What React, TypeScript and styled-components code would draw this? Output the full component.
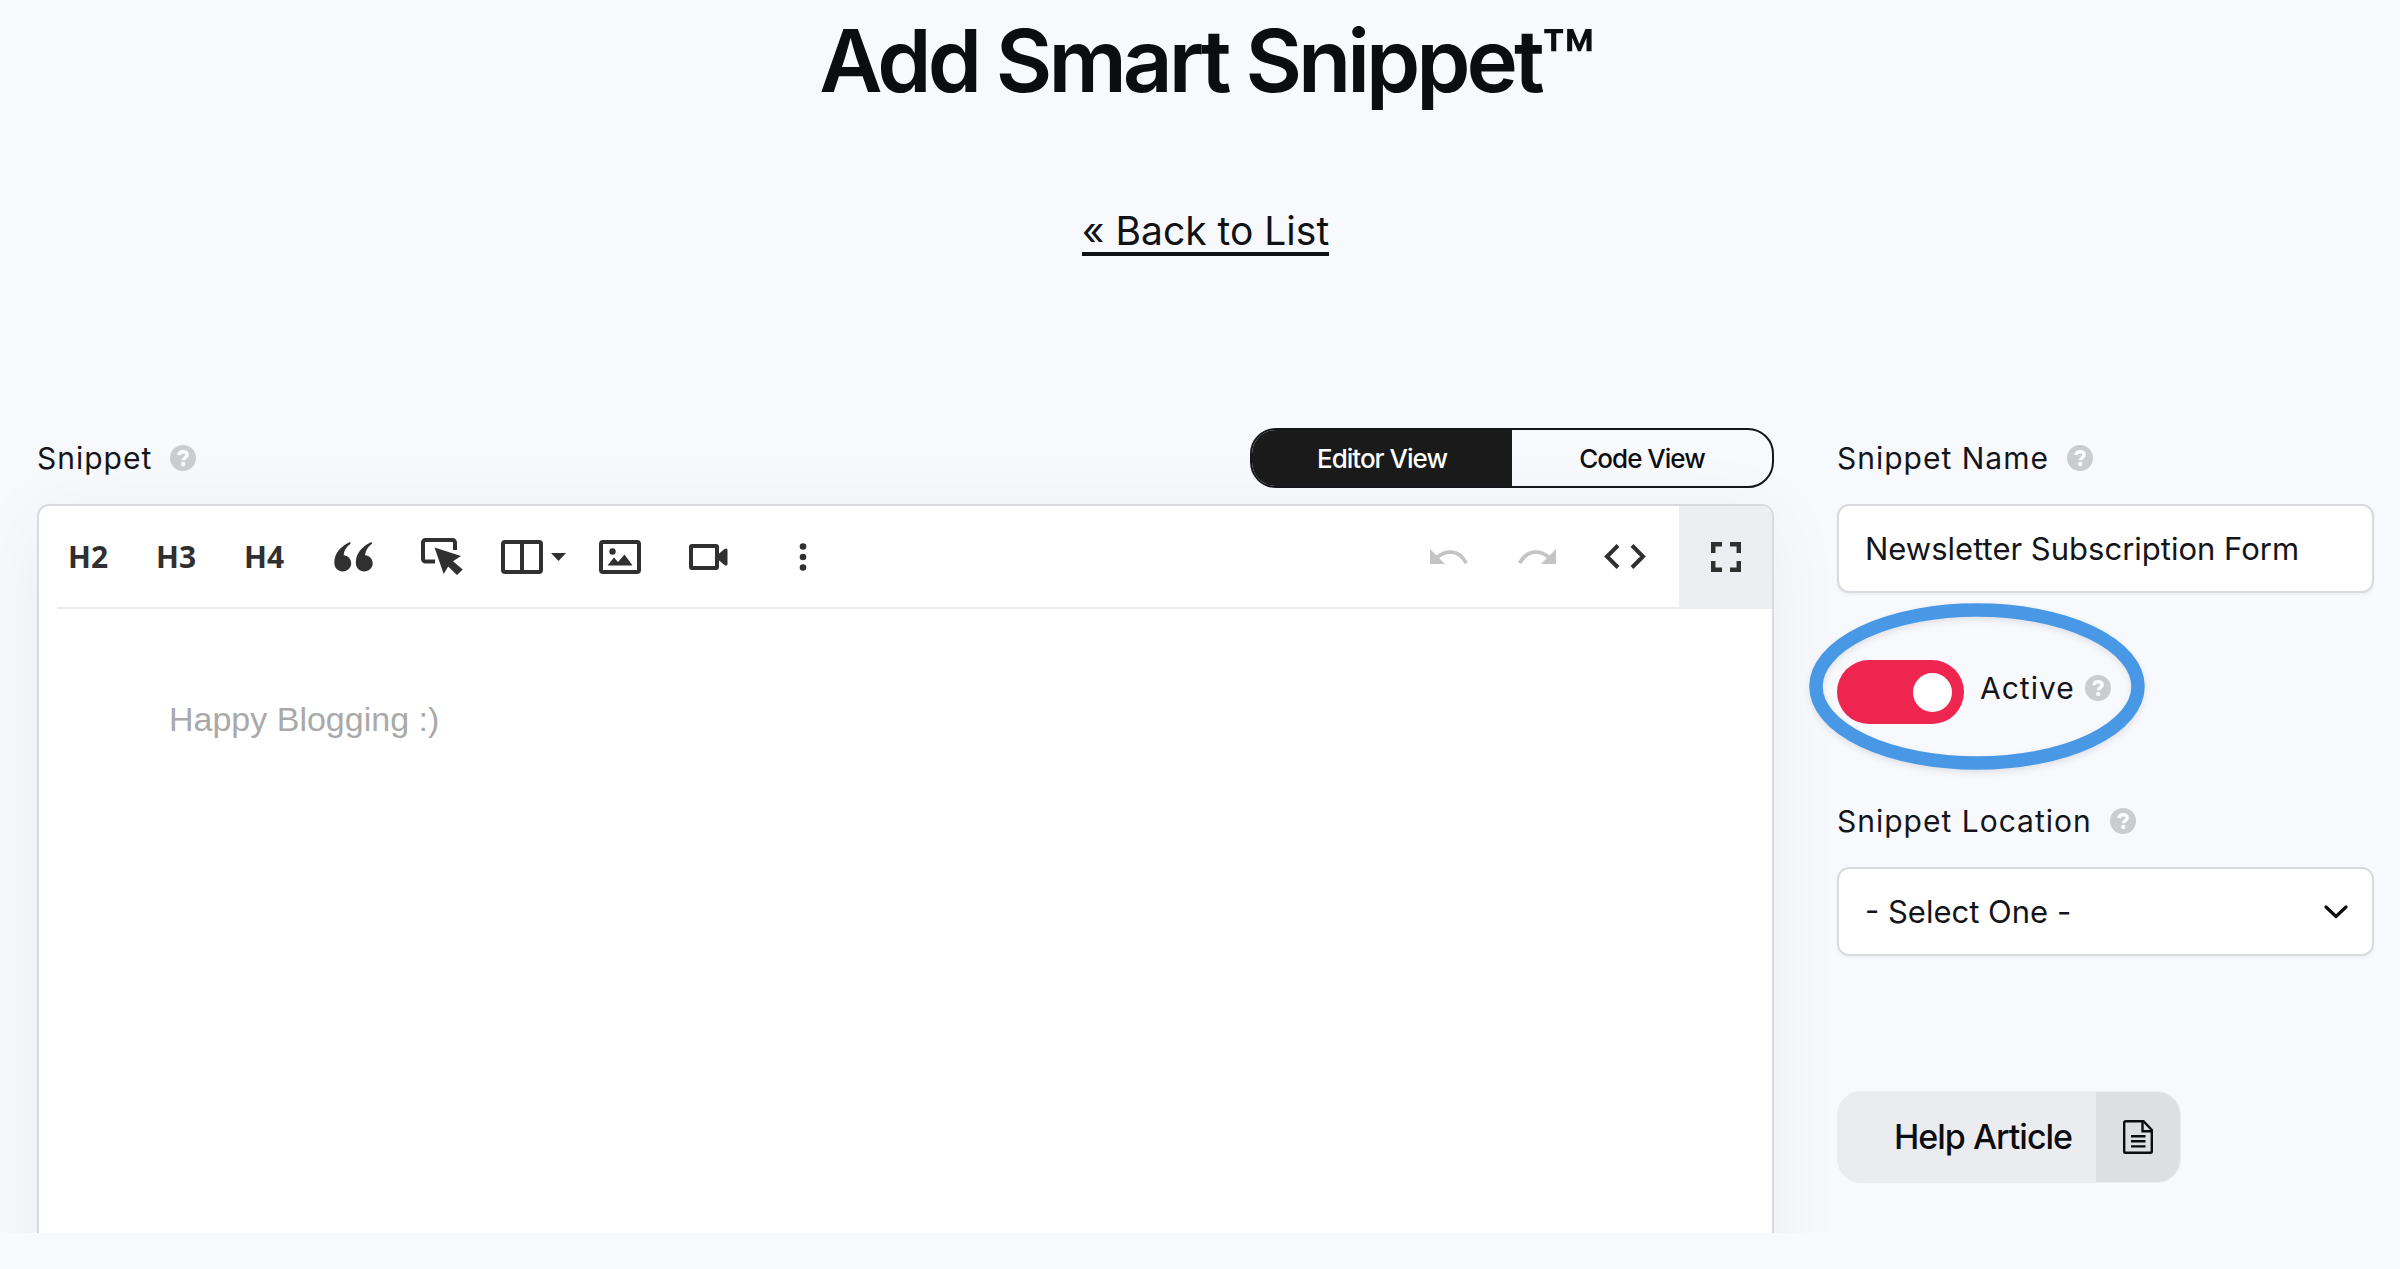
import React from "react";
import styled, { createGlobalStyle } from "styled-components";

const GlobalStyle = createGlobalStyle`
  *, *::before, *::after { box-sizing: border-box; }
  body {
    margin: 0;
    background: #f7f9fd;
    color: #14151a;
    font-family: Inter, "Liberation Sans", sans-serif;
  }
  button, input, select, textarea { font: inherit; color: inherit; }
`;

const Page = styled.div`
  display: flex;
  flex-direction: column;
  height: calc(100vh - 36px);
  padding: 12px 26px 0 37px;
  overflow: hidden;
`;

const Header = styled.header`
  display: flex;
  flex-direction: column;
  align-items: center;
  gap: 100px;
  margin-bottom: 172px;
`;

const Title = styled.h1`
  margin: 0;
  font-size: 87px;
  line-height: 98px;
  font-weight: 600;
  letter-spacing: -4px;
  color: #0c0d10;
`;

const BackLink = styled.a`
  font-size: 39px;
  line-height: 42px;
  color: #111216;
  text-decoration: none;
  border-bottom: 4px solid #111216;
`;

const Columns = styled.main`
  flex: 1;
  min-height: 0;
  display: grid;
  grid-template-columns: minmax(0, 1fr) 537px;
  align-items: start;
  gap: 63px;
`;

const LabelRow = styled.div`
  display: flex;
  align-items: center;
  height: 60px;
  margin-bottom: 16px;
`;

const Label = styled.label<{ $gap?: number }>`
  margin-right: ${(p) => p.$gap ?? 18}px;
  font-size: 30px;
  line-height: 56px;
  letter-spacing: 1px;
  white-space: nowrap;
`;

const HelpButton = styled.button`
  display: grid;
  place-items: center;
  width: 26px;
  height: 26px;
  padding: 0;
  border: 0;
  border-radius: 50%;
  background: #cbccd0;
`;

const Segmented = styled.div`
  display: grid;
  grid-template-columns: 1fr 1fr;
  width: 524px;
  height: 60px;
  margin-left: auto;
  border: 2px solid #15161a;
  border-radius: 26px;
  overflow: hidden;
`;

const Segment = styled.button<{ $active?: boolean }>`
  border: 0;
  padding: 0;
  font-size: 26px;
  font-weight: 500;
  letter-spacing: -1px;
  background: ${(p) => (p.$active ? "#1a1a1a" : "transparent")};
  color: ${(p) => (p.$active ? "#fff" : "#0c0d10")};
`;

const Editor = styled.section`
  display: flex;
  flex-direction: column;
  min-height: 900px;
  border: 2px solid #d9dade;
  border-radius: 12px;
  background: #fff;
  box-shadow: 0 10px 80px rgba(10, 12, 20, 0.05);
  overflow: hidden;
`;

const Toolbar = styled.div`
  display: flex;
  height: 103px;
  margin-left: 18px;
  border-bottom: 2px solid #ececee;
`;

const ToolGroup = styled.div<{ $end?: boolean }>`
  display: flex;
  margin: ${(p) => (p.$end ? "0 10px 0 auto" : "0 0 0 -13px")};
`;

const Tool = styled.button<{ $width?: number; $filled?: boolean }>`
  display: flex;
  align-items: center;
  justify-content: center;
  gap: 8px;
  width: ${(p) => p.$width ?? 88}px;
  padding: 0;
  border: 0;
  background: ${(p) => (p.$filled ? "#edeef2" : "transparent")};
  color: #303030;
  font-family: "Noto Sans", "Open Sans", sans-serif;
  font-size: 30px;
  font-weight: 700;
  &:disabled { color: #c4c4c4; }
`;

const Body = styled.textarea`
  flex: 1;
  padding: 86px 130px;
  border: 0;
  outline: 0;
  resize: none;
  background: transparent;
  font-family: "Liberation Sans", Arial, sans-serif;
  font-size: 34px;
  line-height: 48px;
  &::placeholder { color: #a9a9a9; opacity: 1; }
`;

const Sidebar = styled.form`
  display: flex;
  flex-direction: column;
  gap: 67px;
`;

const TextInput = styled.input`
  display: block;
  width: 100%;
  height: 89px;
  padding: 0 26px;
  border: 2px solid #d9dade;
  border-radius: 12px;
  background: #fff;
  box-shadow: 0 2px 3px rgba(20, 24, 40, 0.04);
  font-size: 31px;
`;

const SelectWrap = styled.div`
  position: relative;
`;

const SelectBox = styled(TextInput).attrs({ as: "select" })`
  appearance: none;
`;

const Chevron = styled.svg`
  position: absolute;
  right: 26px;
  top: 50%;
  margin-top: -7px;
  pointer-events: none;
`;

const SwitchRow = styled.div`
  position: relative;
  display: flex;
  align-items: flex-start;
  height: 64px;
`;

const SwitchLabelGroup = styled.div`
  display: flex;
  align-items: center;
`;

const Switch = styled.input`
  appearance: none;
  flex: none;
  display: flex;
  align-items: center;
  justify-content: flex-end;
  width: 127px;
  height: 64px;
  margin: 0 16px 0 0;
  padding: 0 12px;
  border-radius: 32px;
  background: #c9cbd0;
  &:checked { background: #ee254f; }
  &::after {
    content: "";
    width: 39px;
    height: 39px;
    border-radius: 50%;
    background: #fff;
  }
`;

const Highlight = styled.svg`
  position: absolute;
  left: -28px;
  top: -57px;
  pointer-events: none;
  overflow: visible;
  filter: drop-shadow(0 3px 3px rgba(20, 24, 40, 0.1));
`;

const HelpArticle = styled.a`
  display: flex;
  align-self: flex-start;
  width: 344px;
  height: 92px;
  margin-top: 68px;
  border: 1px solid #ebecef;
  border-radius: 24px;
  background: #ebecf0;
  color: #0c0d10;
  text-decoration: none;
  overflow: hidden;
`;

const HelpText = styled.span`
  flex: 1;
  padding: 0 24px 0 56px;
  font-size: 34px;
  line-height: 90px;
  font-weight: 500;
  letter-spacing: -1px;
  white-space: nowrap;
`;

const HelpIcon = styled.span`
  display: grid;
  place-items: center;
  width: 85px;
  background: #dedfe3;
`;

const Help = ({ topic }: { topic: string }) => (
  <HelpButton type="button" aria-label={`Help: ${topic}`}>
    <svg width="26" height="26" viewBox="0 0 26 26" fill="none">
      <path d="M9 10.200C9.200 7.900 10.900 6.700 13 6.700c2.400 0 4.100 1.200 4.100 3.200 0 2.900-3.700 2.600-3.700 5.400" stroke="#fafbfd" strokeWidth="3.600" />
      <circle cx="13.300" cy="19" r="2.200" fill="#fafbfd" />
    </svg>
  </HelpButton>
);

const QuoteIcon = () => (
  <svg width="39" height="30" viewBox="0 0 39 30" fill="currentColor">
    <path d="M16 0C8 3.500.3 10.500.3 20.500.3 26 4 29.500 8.800 29.500c4.700 0 8.400-3.600 8.400-8.200 0-4.400-3.200-7.900-7.600-8.100C10 8.500 12.500 4.500 16.700 1.600z" />
    <path d="M37.500 0c-8 3.500-15.700 10.500-15.700 20.500 0 5.500 3.700 9 8.500 9 4.700 0 8.400-3.600 8.400-8.200 0-4.400-3.200-7.900-7.600-8.100.4-4.700 2.900-8.700 7.100-11.600z" />
  </svg>
);

const ButtonIcon = () => (
  <svg width="42" height="37" viewBox="0 0 42 37" fill="none">
    <path d="M14 23.500H4.500a2.500 2.500 0 0 1-2.500-2.500V4.500A2.500 2.500 0 0 1 4.500 2h27A2.500 2.500 0 0 1 34 4.500V12" stroke="currentColor" strokeWidth="4" />
    <path d="M13.500 9.500 40 18l-8 5.300 9.700 8.200-5.700 5.500-8.800-8.500-4.500 7.500z" fill="currentColor" />
  </svg>
);

const ColumnsIcon = () => (
  <svg width="42" height="34" viewBox="0 0 42 34" fill="none" stroke="currentColor" strokeWidth="4">
    <rect x="2" y="2" width="38" height="30" rx="2" />
    <path d="M21 2v30" />
  </svg>
);

const CaretIcon = () => (
  <svg width="15" height="8" viewBox="0 0 15 8" fill="currentColor">
    <path d="M0 0h15L7.500 8z" />
  </svg>
);

const ImageIcon = () => (
  <svg width="42" height="34" viewBox="0 0 42 34" fill="none">
    <rect x="2" y="2" width="38" height="30" rx="2" stroke="currentColor" strokeWidth="4" />
    <circle cx="13.500" cy="11.500" r="3.200" fill="currentColor" />
    <path d="M8.500 25.500 15 17.500l4 4.500 6.500-7.500 8 11z" fill="currentColor" />
  </svg>
);

const VideoIcon = () => (
  <svg width="39" height="26" viewBox="0 0 39 26" fill="none">
    <rect x="2" y="2" width="26" height="22" rx="1" stroke="currentColor" strokeWidth="4" />
    <path d="M29 10.500 35.500 5Q38.500 3.500 38.500 6v14q0 2.500-3 1L29 15.500z" fill="currentColor" />
  </svg>
);

const DotsIcon = () => (
  <svg width="8" height="28" viewBox="0 0 8 28" fill="currentColor">
    <circle cx="4" cy="3.500" r="3.300" />
    <circle cx="4" cy="14" r="3.300" />
    <circle cx="4" cy="24.500" r="3.300" />
  </svg>
);

const CurveIcon = ({ flip }: { flip?: boolean }) => (
  <svg width="38" height="16" viewBox="0 0 38 16" fill="none">
    <g transform={flip ? "matrix(-1 0 0 1 38 0)" : undefined}>
      <path d="M0 0v15h15z" fill="currentColor" />
      <path d="M7 8.500C16 .5 29 .5 36.300 14.200" stroke="currentColor" strokeWidth="3.800" />
    </g>
  </svg>
);

const CodeIcon = () => (
  <svg width="42" height="25" viewBox="0 0 42 25" fill="none" stroke="currentColor" strokeWidth="4">
    <path d="M14 1.500 3 12.500l11 11M28 1.500l11 11-11 11" />
  </svg>
);

const FullscreenIcon = () => (
  <svg width="30" height="30" viewBox="0 0 30 30" fill="none" stroke="currentColor" strokeWidth="4.500">
    <path d="M11 2.200H2.200V11M19 2.200h8.800V11M11 27.800H2.200V19M19 27.800h8.800V19" />
  </svg>
);

const ArticleIcon = () => (
  <svg width="30" height="34" viewBox="0 0 30 34" fill="none" stroke="#0c0d10" strokeWidth="2.400">
    <path d="M3 1.200h17.500L28.800 10v21.500q0 1.300-1.300 1.300H2.500q-1.300 0-1.300-1.300V2.500q0-1.300 1.800-1.300z" />
    <path d="M19.500 1.500v9.800h9.200" />
    <path d="M8 16.200h14.500M8 21.300h14.500M8 26.400h14.500" />
  </svg>
);

export default function App() {
  return (
    <>
      <GlobalStyle />
      <Page>
        <Header>
          <Title>Add Smart Snippet™</Title>
          <BackLink href="#list">« Back to List</BackLink>
        </Header>
        <Columns>
          <div>
            <LabelRow>
              <Label htmlFor="snippet">Snippet</Label>
              <Help topic="Snippet" />
              <Segmented role="group" aria-label="View">
                <Segment type="button" $active aria-pressed="true">Editor View</Segment>
                <Segment type="button" aria-pressed="false">Code View</Segment>
              </Segmented>
            </LabelRow>
            <Editor>
              <Toolbar role="toolbar" aria-label="Formatting">
                <ToolGroup>
                  <Tool type="button">H2</Tool>
                  <Tool type="button">H3</Tool>
                  <Tool type="button">H4</Tool>
                  <Tool type="button" aria-label="Quote" $width={90}><QuoteIcon /></Tool>
                  <Tool type="button" aria-label="Button"><ButtonIcon /></Tool>
                  <Tool type="button" aria-label="Columns" $width={94}><ColumnsIcon /><CaretIcon /></Tool>
                  <Tool type="button" aria-label="Image" $width={80}><ImageIcon /></Tool>
                  <Tool type="button" aria-label="Video" $width={96}><VideoIcon /></Tool>
                  <Tool type="button" aria-label="More" $width={94}><DotsIcon /></Tool>
                </ToolGroup>
                <ToolGroup $end>
                  <Tool type="button" aria-label="Undo" disabled><CurveIcon /></Tool>
                  <Tool type="button" aria-label="Redo" disabled><CurveIcon flip /></Tool>
                  <Tool type="button" aria-label="Source code"><CodeIcon /></Tool>
                </ToolGroup>
                <Tool type="button" aria-label="Fullscreen" $width={93} $filled><FullscreenIcon /></Tool>
              </Toolbar>
              <Body id="snippet" placeholder="Happy Blogging :)" />
            </Editor>
          </div>
          <Sidebar>
            <div>
              <LabelRow>
                <Label htmlFor="name">Snippet Name</Label>
                <Help topic="Snippet Name" />
              </LabelRow>
              <TextInput id="name" defaultValue="Newsletter Subscription Form" />
            </div>
            <SwitchRow>
              <Switch id="active" type="checkbox" role="switch" defaultChecked />
              <SwitchLabelGroup>
                <Label htmlFor="active" $gap={10}>Active</Label>
                <Help topic="Active" />
              </SwitchLabelGroup>
              <Highlight width="336" height="167" viewBox="0 0 336 167" fill="none" aria-hidden="true">
                <ellipse cx="168" cy="83.500" rx="161" ry="76.500" stroke="#4898e6" strokeWidth="13.500" />
              </Highlight>
            </SwitchRow>
            <div>
              <LabelRow>
                <Label htmlFor="location">Snippet Location</Label>
                <Help topic="Snippet Location" />
              </LabelRow>
              <SelectWrap>
                <SelectBox id="location">
                  <option>- Select One -</option>
                </SelectBox>
                <Chevron width="24" height="14" viewBox="0 0 24 14" fill="none" aria-hidden="true">
                  <path d="M2 2l10 9.500L22 2" stroke="#0c0d10" strokeWidth="3.200" strokeLinecap="round" strokeLinejoin="round" />
                </Chevron>
              </SelectWrap>
            </div>
            <HelpArticle href="#help">
              <HelpText>Help Article</HelpText>
              <HelpIcon><ArticleIcon /></HelpIcon>
            </HelpArticle>
          </Sidebar>
        </Columns>
      </Page>
    </>
  );
}
